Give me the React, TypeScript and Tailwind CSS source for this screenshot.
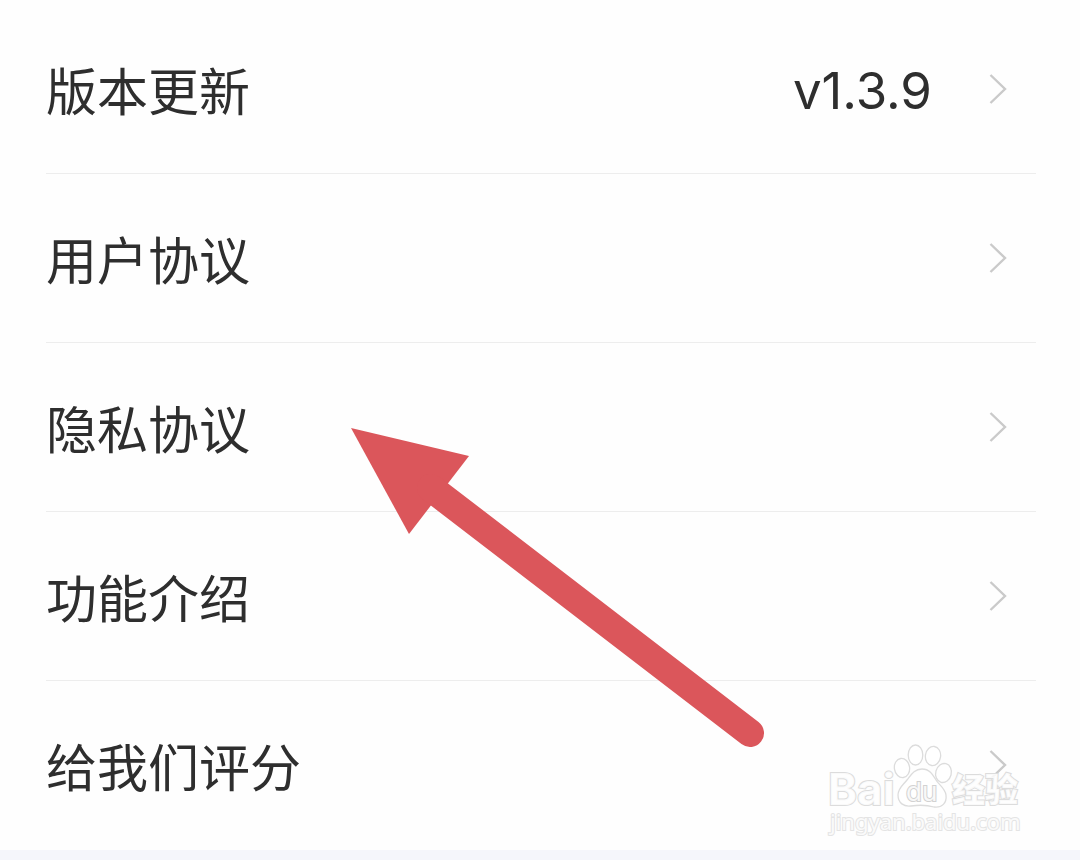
interface SettingItem {
  id: string;
  label: string;
  value?: string;
}

const items: SettingItem[] = [
  { id: 'version', label: '版本更新', value: 'v1.3.9' },
  { id: 'terms', label: '用户协议' },
  { id: 'privacy', label: '隐私协议' },
  { id: 'features', label: '功能介绍' },
  { id: 'rate', label: '给我们评分' },
];

function Chevron() {
  return (
    <svg
      className="h-8 w-5 shrink-0"
      viewBox="0 0 20 32"
      fill="none"
      stroke="#cacaca"
      strokeWidth="2.4"
      aria-hidden="true"
    >
      <path d="M2.5 2 L17 16 L2.5 30" />
    </svg>
  );
}

function SettingRow({ item }: { item: SettingItem }) {
  return (
    <li className="border-b border-[#ededed] last:border-transparent">
      <a href={`#${item.id}`} className="flex h-[168px] items-center justify-between pr-7">
        <span>{item.label}</span>
        <span className="flex items-center gap-14">
          {item.value && <span className="pt-0.5 font-[Inter,sans-serif]">{item.value}</span>}
          <Chevron />
        </span>
      </a>
    </li>
  );
}

function PointerArrow() {
  return (
    <svg
      className="pointer-events-none absolute top-[428px] left-[351px] h-[320px] w-[416px]"
      viewBox="0 0 416 320"
      aria-hidden="true"
    >
      <path d="M0 0 L118 28 L58 106 Z" fill="#db565b" />
      <path d="M80 60 L399 305" stroke="#db565b" strokeWidth="28" strokeLinecap="round" />
    </svg>
  );
}

function Watermark() {
  return (
    <svg
      className="pointer-events-none absolute top-[738px] right-[54px] h-[102px] w-[204px]"
      viewBox="0 0 204 102"
      fill="#ffffff"
      fillOpacity="0.85"
      stroke="#dcdcdc"
      strokeWidth="1.3"
      role="img"
      aria-label="Baidu 经验"
    >
      {/* paw */}
      <ellipse cx="80" cy="30" rx="7.6" ry="9.6" transform="rotate(-8 80 30)" />
      <ellipse cx="93.5" cy="17" rx="7.3" ry="10" />
      <ellipse cx="111" cy="18" rx="7.6" ry="9.6" transform="rotate(8 111 18)" />
      <ellipse cx="121.5" cy="35" rx="7.8" ry="9.6" transform="rotate(15 121.5 35)" />
      <path d="M100 31 C92 31 89 37 85 42 C81 47 76 50 76 57 C76 65 82 69 89 68 C96 67 105 67 112 69 C120 70 125 65 124 57 C123 50 117 47 114 42 C111 37 108 31 100 31 Z" />

      <g paintOrder="stroke" strokeWidth="2">
        <text x="6" y="67" fontFamily="Inter, sans-serif" fontSize="44" fontWeight="700">
          Bai
        </text>
        <text x="84" y="63" fontFamily="Inter, sans-serif" fontSize="26" stroke="#d2d2d2">
          du
        </text>
        <text x="130" y="64" fontFamily="'Noto Sans CJK SC', sans-serif" fontSize="33" fontWeight="900">
          经验
        </text>
        <text x="8" y="92" fontFamily="'Noto Sans', sans-serif" fontSize="22" stroke="#e4e4e4">
          jingyan.baidu.com
        </text>
      </g>
    </svg>
  );
}

export default function App() {
  return (
    <div className="relative flex min-h-screen flex-col overflow-hidden bg-[#f5f6fb]">
      <main className="bg-[#fefefe] pt-[5px]">
        <ul className="mr-11 ml-[46px] font-['Noto_Sans_CJK_SC',sans-serif] text-[51px] leading-none text-[#2e2e2e]">
          {items.map((item) => (
            <SettingRow key={item.id} item={item} />
          ))}
        </ul>
      </main>
      <PointerArrow />
      <Watermark />
    </div>
  );
}
